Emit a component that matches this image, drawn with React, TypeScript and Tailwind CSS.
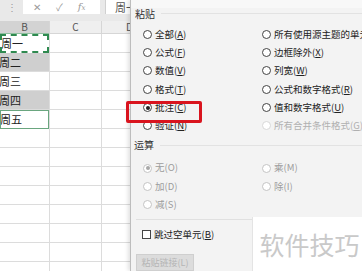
import React from "react";

const font = "font-['Noto_Sans_CJK_SC','Noto_Sans',sans-serif]";

function Radio({ label, acc, checked = false, disabled = false, faint = false }: { label: string; acc: string; checked?: boolean; disabled?: boolean; faint?: boolean }) {
  const circle = faint
    ? "border-[#d8d8d8]"
    : disabled
    ? "border-[#c4c4c4]"
    : "border-[#444]";
  const text = faint ? "text-[#b0b0b0]" : disabled ? "text-[#9c9c9c]" : "text-[#222]";
  return (
    <div className="flex items-center h-[18.3px]">
      <span className={`w-[9px] h-[9px] rounded-full border bg-white flex items-center justify-center ${circle}`}>
        {checked && <span className={`w-[4px] h-[4px] rounded-full ${disabled ? "bg-[#a8a8a8]" : "bg-[#222]"}`} />}
      </span>
      <span className={`ml-[3px] text-[9.5px] leading-none whitespace-nowrap ${text}`}>
        {label}(<span className={disabled ? "" : "underline"}>{acc}</span>)
      </span>
    </div>
  );
}

export default function App() {
  const rows = [
    { t: "周一", kind: "dash" },
    { t: "周二", kind: "gray" },
    { t: "周三", kind: "white" },
    { t: "周四", kind: "gray" },
    { t: "周五", kind: "active" },
  ];
  const empties = Array.from({ length: 8 });
  return (
    <div className={`relative w-[362px] h-[271px] overflow-hidden bg-white ${font}`}>
      {/* Spreadsheet */}
      <div className="flex flex-col">
        <div className="h-[21px] bg-[#e9e9e9] flex items-start">
          <div className="w-[23px] h-[14px] flex items-center justify-center text-[#9a9a9a] text-[10px] leading-none">⋮</div>
          <div className="w-[77px] h-[14px] bg-white flex items-center text-[#9a9a9a]">
            <span className="ml-[10px] text-[10px] leading-none">✕</span>
            <span className="ml-[15px] text-[10px] leading-none">✓</span>
            <span className="ml-[15px] text-[10px] leading-none italic font-['DejaVu_Serif',serif]">f<span className="text-[7px]">x</span></span>
          </div>
          <div className="ml-[5px] flex-1 h-[14px] bg-white border-l border-[#d0d0d0] flex items-center">
            <span className="ml-[9px] text-[11px] leading-none text-[#555]">周一</span>
          </div>
        </div>
        <div className="grid grid-cols-[49px_52px_1fr] h-[13px] text-[10px] leading-none text-[#555]">
          <div className="bg-[#d3d3d3] border-b border-[#8fbf9f] flex items-center justify-center">B</div>
          <div className="bg-[#efefef] border-l border-b border-[#d6d6d6] flex items-center justify-center">C</div>
          <div className="bg-[#efefef] border-l border-b border-[#d6d6d6] flex items-center pl-[24px]">D</div>
        </div>
        {rows.map((r, i) => (
          <div key={i} className="grid grid-cols-[49px_52px_1fr] h-[19px]">
            <div
              className={`flex items-center text-[11px] leading-none text-[#222] overflow-hidden ${
                r.kind === "gray"
                  ? "bg-[#cfcfcf] border-b border-[#dcdcdc]"
                  : r.kind === "dash"
                  ? "border-2 border-dashed border-[#2f8a50]"
                  : r.kind === "active"
                  ? "border border-[#6aa67f]"
                  : "border-b border-[#dcdcdc]"
              }`}
            >
              <span className="-ml-[1px]">{r.t}</span>
            </div>
            <div className="border-l border-b border-[#dcdcdc]" />
            <div className="border-l border-b border-[#dcdcdc]" />
          </div>
        ))}
        {empties.map((_, i) => (
          <div key={i} className="grid grid-cols-[49px_52px_1fr] h-[19px]">
            <div className="border-b border-[#dcdcdc]" />
            <div className="border-l border-b border-[#dcdcdc]" />
            <div className="border-l border-b border-[#dcdcdc]" />
          </div>
        ))}
      </div>

      {/* Paste special dialog */}
      <div className="absolute left-[130px] top-0 w-[232px] h-[271px] bg-[#f3f3f3] border-l border-[#bdbdbd] shadow-[-2px_0_4px_rgba(0,0,0,0.12)] flex flex-col">
        <div className="h-[9px] bg-[#f8f8f8]" />
        <div className="flex items-center h-[12px] pl-[4px] pr-0">
          <span className="text-[10px] leading-none text-[#333]">粘贴</span>
          <div className="flex-1 ml-[6px] border-t border-[#e2e2e2]" />
        </div>
        <div className="grid grid-cols-[119px_1fr] pl-[12px] mt-[6px]">
          <div className="flex flex-col">
            <Radio label="全部" acc="A" />
            <Radio label="公式" acc="F" />
            <Radio label="数值" acc="V" />
            <Radio label="格式" acc="T" />
            <Radio label="批注" acc="C" checked />
            <Radio label="验证" acc="N" />
          </div>
          <div className="flex flex-col">
            <div className="flex items-center h-[18.3px]">
              <span className="w-[9px] h-[9px] rounded-full border border-[#444] bg-white" />
              <span className="ml-[3px] text-[9.5px] leading-none whitespace-nowrap text-[#222]">所有使用源主题的单元(H)</span>
            </div>
            <Radio label="边框除外" acc="X" />
            <Radio label="列宽" acc="W" />
            <Radio label="公式和数字格式" acc="R" />
            <Radio label="值和数字格式" acc="U" />
            <Radio label="所有合并条件格式" acc="G" faint />
          </div>
        </div>
        <div className="flex items-center h-[12px] pl-[3px] mt-[5px]">
          <span className="text-[10px] leading-none text-[#333]">运算</span>
          <div className="flex-1 ml-[6px] border-t border-[#e2e2e2]" />
        </div>
        <div className="grid grid-cols-[119px_1fr] pl-[12px] mt-[8px]">
          <div className="flex flex-col">
            <Radio label="无" acc="O" checked disabled />
            <Radio label="加" acc="D" disabled />
            <Radio label="减" acc="S" disabled />
          </div>
          <div className="flex flex-col">
            <Radio label="乘" acc="M" disabled />
            <Radio label="除" acc="I" disabled />
          </div>
        </div>
        <div className="ml-[5px] w-[117px] border-t border-[#e0e0e0] mt-[5px]" />
        <div className="flex items-center pl-[11px] mt-[10px] h-[10px]">
          <span className="w-[9px] h-[9px] border border-[#444] bg-white" />
          <span className="ml-[3px] text-[9.5px] leading-none text-[#222]">
            跳过空单元(<span className="underline">B</span>)
          </span>
        </div>
        <div className="ml-[5px] mt-[15px] w-[58px] h-[18px] bg-[#dcdcdc] border border-[#cfcfcf] flex items-center justify-center text-[9px] leading-none text-[#b5b5b5]">
          粘贴链接(L)
        </div>
      </div>

      {/* Red highlight */}
      <div className="absolute left-[126px] top-[101px] w-[76px] h-[22px] border-[3px] border-[#d9141e] rounded-[2px]" />

      {/* Watermark */}
      <div className="absolute left-[252px] top-[217px] w-[110px] h-[54px] bg-white border-l border-[#e4e4e4] flex items-center justify-center">
        <span className="text-[25px] leading-none text-[#c9c9c9] ml-[4px]">软件技巧</span>
      </div>
    </div>
  );
}
